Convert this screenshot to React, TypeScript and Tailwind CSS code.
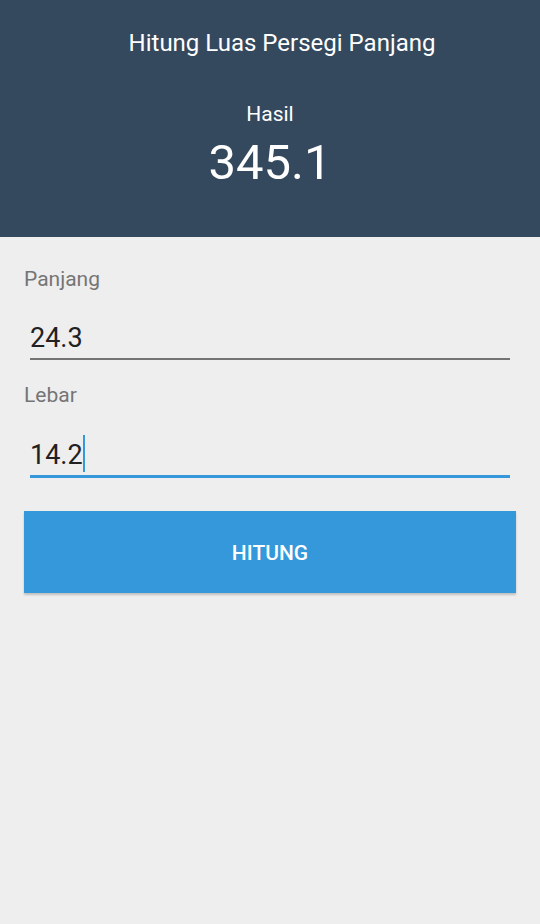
export default function App() {
  return (
    <div
      className="min-h-[924px] w-full bg-[#eeeeee]"
      style={{ fontFamily: "Roboto, 'Noto Sans', sans-serif" }}
    >
      <header className="flex h-[237px] flex-col items-center bg-[#34495e] pt-[29px] text-white">
        <h1 className="pl-[24px] text-[24px] leading-[28px] font-normal">
          Hitung Luas Persegi Panjang
        </h1>
        <p className="mt-[45px] text-[21px] leading-[24px]">Hasil</p>
        <p className="mt-[9px] text-[49px] leading-[56px]">345.1</p>
      </header>

      <main className="px-6">
        <label className="block pt-[28px] text-[21px] leading-[28px] text-[#757575]">
          Panjang
        </label>
        <div className="mx-[6px] mt-[27px] border-b-2 border-[#737373] pb-[2px]">
          <span className="block h-[36px] text-[27px] leading-[36px] text-[#212121]">
            24.3
          </span>
        </div>

        <label className="mt-[21px] block text-[21px] leading-[28px] text-[#757575]">
          Lebar
        </label>
        <div className="mx-[6px] mt-[28px] border-b-[3px] border-[#3498db] pb-[2px]">
          <div className="flex h-[36px] items-start">
            <span className="text-[27px] leading-[36px] text-[#212121]">14.2</span>
            <span className="-mt-[2px] h-[37px] w-[2px] bg-[#3498db]" />
          </div>
        </div>

        <button className="mt-[33px] flex h-[82px] w-full items-center justify-center bg-[#3498db] pt-[4px] text-[21px] font-medium text-white shadow-[0_2px_2px_rgba(0,0,0,0.2)]">
          HITUNG
        </button>
      </main>
    </div>
  );
}
